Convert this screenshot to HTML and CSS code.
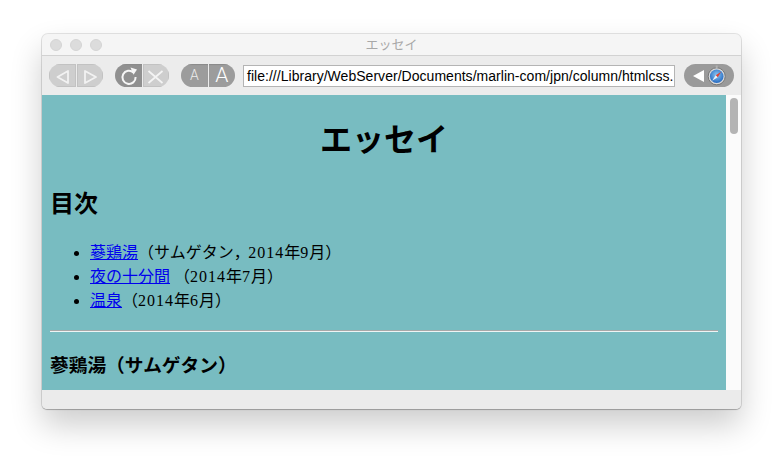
FILE: index.html
```html
<!DOCTYPE html>
<html lang="ja">
<head>
<meta charset="utf-8">
<title>エッセイ</title>
<link rel="stylesheet" href="styles.css">
</head>
<body>
<div class="window">
  <div class="titlebar">
    <div class="lights"><span class="light"></span><span class="light"></span><span class="light"></span></div>
    <div class="title">エッセイ</div>
  </div>
  <div class="toolbar">
    <div class="pill">
      <div class="seg off"><svg width="26" height="23" viewBox="0 0 26 23"><path d="M19 7 L8.5 13 L19 19 Z" fill="none" stroke="#f2f2f2" stroke-width="1.8" stroke-linejoin="round"/></svg></div>
      <div class="seg off"><svg width="26" height="23" viewBox="0 0 26 23"><path d="M8 7 L19 13 L8 19 Z" fill="none" stroke="#f2f2f2" stroke-width="1.8" stroke-linejoin="round"/></svg></div>
    </div>
    <div class="pill">
      <div class="seg on dark"><svg width="26" height="23" viewBox="0 0 26 23"><path d="M18.5 8.5 A6.6 6.6 0 1 0 20.6 13" fill="none" stroke="#f6f6f6" stroke-width="2"/><path d="M15.5 3.5 L22 5.5 L18.5 10.8 Z" fill="#f6f6f6"/></svg></div>
      <div class="seg off"><svg width="26" height="23" viewBox="0 0 26 23"><path d="M5.5 7 L19.5 19 M19.5 7 L5.5 19" fill="none" stroke="#f4f4f4" stroke-width="1.7"/></svg></div>
    </div>
    <div class="pill pill-font">
      <div class="seg on"><span class="a-small">A</span></div>
      <div class="seg on"><span class="a-large">A</span></div>
    </div>
    <div class="url">file:///Library/WebServer/Documents/marlin-com/jpn/column/htmlcss.</div>
    <div class="pill-right">
      <svg width="50" height="23" viewBox="0 0 50 23">
        <defs><radialGradient id="compass" cx="50%" cy="40%" r="60%"><stop offset="0" stop-color="#8cc8f4"/><stop offset="1" stop-color="#2468c0"/></radialGradient></defs>
        <path d="M20 6 L9 12 L20 18 Z" fill="#fff"/>
        <circle cx="32.7" cy="12.3" r="8.5" fill="#d8d8d8" stroke="#666" stroke-width="0.8"/>
        <circle cx="32.7" cy="12.3" r="6.8" fill="url(#compass)"/>
        <path d="M37.2 7.8 L31.7 11.3 L33.7 13.3 Z" fill="#e04030"/>
        <path d="M28.2 16.8 L31.7 11.3 L33.7 13.3 Z" fill="#eef2f6"/>
        <rect x="31.7" y="1.5" width="2" height="2.5" fill="#b0b0b0"/>
      </svg>
    </div>
  </div>
  <div class="viewport">
    <div class="page">
      <h1>エッセイ</h1>
      <h2>目次</h2>
      <ul>
        <li><a href="#a">蔘鶏湯</a>（サムゲタン<span class="comma">，</span><span class="num">2014</span>年<span class="num">9</span>月）</li>
        <li><a href="#b">夜の十分間</a> （<span class="num">2014</span>年<span class="num">7</span>月）</li>
        <li><a href="#c">温泉</a>（<span class="num">2014</span>年<span class="num">6</span>月）</li>
      </ul>
      <hr>
      <h3>蔘鶏湯（サムゲタン）</h3>
    </div>
    <div class="scrollbar"><div class="thumb"></div></div>
  </div>
  <div class="statusbar"></div>
</div>
</body>
</html>
```
FILE: styles.css
```css
html, body { margin: 0; padding: 0; height: 100%; background: #fff; overflow: hidden; }
body { padding: 34px 42px 0; box-sizing: border-box; }

.window {
  width: 699px;
  height: 375px;
  display: flex;
  flex-direction: column;
  background: #ebebeb;
  border-radius: 6px 6px 5px 5px;
  overflow: hidden;
  box-shadow: 0 0 0 1px rgba(0,0,0,.1), 0 1px 1px rgba(0,0,0,.2), 0 16px 32px rgba(0,0,0,.2);
  font-family: "Liberation Sans", "Noto Sans CJK JP", sans-serif;
}

.titlebar {
  position: relative;
  height: 21px;
  flex: none;
  display: flex;
  align-items: center;
  justify-content: center;
  background: #f5f5f5;
  border-bottom: 1px solid #d2d2d2;
}
.lights { position: absolute; left: 8px; top: 5px; display: flex; gap: 8px; }
.light { width: 12px; height: 12px; border-radius: 50%; background: #dcdcdc; border: 1px solid #d4d4d4; box-sizing: border-box; }
.title { font-size: 13px; color: #a8a8a8; line-height: 21px; }

.toolbar {
  height: 39px;
  flex: none;
  box-sizing: border-box;
  display: flex;
  align-items: center;
  padding: 0 7px;
  background: #ececec;
}
.pill {
  width: 54px;
  height: 23px;
  flex: none;
  margin-right: 12px;
  display: flex;
  gap: 1px;
  border-radius: 12px;
  overflow: hidden;
}
.pill-font { margin-right: 8px; }
.seg { flex: 1; display: flex; align-items: center; justify-content: center; overflow: hidden; }
.seg svg { display: block; flex: none; }
.seg.off { background: #cecece; box-shadow: inset 0 0 0 1px #c2c2c2; }
.seg.on { background: #9c9c9c; box-shadow: inset 0 1px 1px #8a8a8a; }
.seg.dark { background: #909090; }
.a-small { font-family: Roboto, "Liberation Sans", sans-serif; font-weight: 300; font-size: 14px; line-height: 23px; color: #ececec; }
.a-large { font-family: Roboto, "Liberation Sans", sans-serif; font-weight: 300; font-size: 21px; line-height: 23px; color: #fff; }

.url {
  width: 432px;
  height: 22px;
  flex: none;
  box-sizing: border-box;
  border: 1px solid #b4b4b4;
  background: #fff;
  padding-left: 3px;
  font-size: 14px;
  letter-spacing: .03px;
  line-height: 20px;
  color: #000;
  white-space: nowrap;
  overflow: hidden;
}
.pill-right {
  width: 50px;
  height: 23px;
  flex: none;
  margin-left: 9px;
  border-radius: 12px;
  background: #9a9a9a;
}
.pill-right svg { display: block; }

.viewport { flex: 1; min-height: 0; display: flex; overflow: hidden; }
.page {
  flex: 1;
  min-width: 0;
  background: #78bcc1;
  padding: 0 8px;
  overflow: hidden;
  color: #000;
  font-family: "Liberation Serif", "Noto Sans CJK JP", serif;
  font-size: 16px;
  line-height: 24px;
  text-spacing-trim: space-all;
}
.num { letter-spacing: 1px; }
.comma { letter-spacing: -1.5px; }
h1 { font-size: 32px; line-height: 40px; margin: 25px 0 0; text-align: center; }
h2 { font-size: 24px; line-height: 32px; margin: 28px 0 0; }
ul { margin: 21px 0 0; padding-left: 40px; }
a { color: #0000ee; }
hr { margin: 17px 0 0; height: 0; border: 0; border-top: 1px solid #a8a8a8; border-bottom: 1px solid #eef4f4; }
h3 { font-size: 18.72px; line-height: 26px; margin: 21px 0 0; }

.scrollbar { width: 15px; flex: none; background: #fbfbfb; }
.thumb { width: 8px; height: 36px; margin: 3px 0 0 4px; border-radius: 4px; background: #b4b4b4; }

.statusbar { height: 19px; flex: none; background: #ebebeb; }
```
